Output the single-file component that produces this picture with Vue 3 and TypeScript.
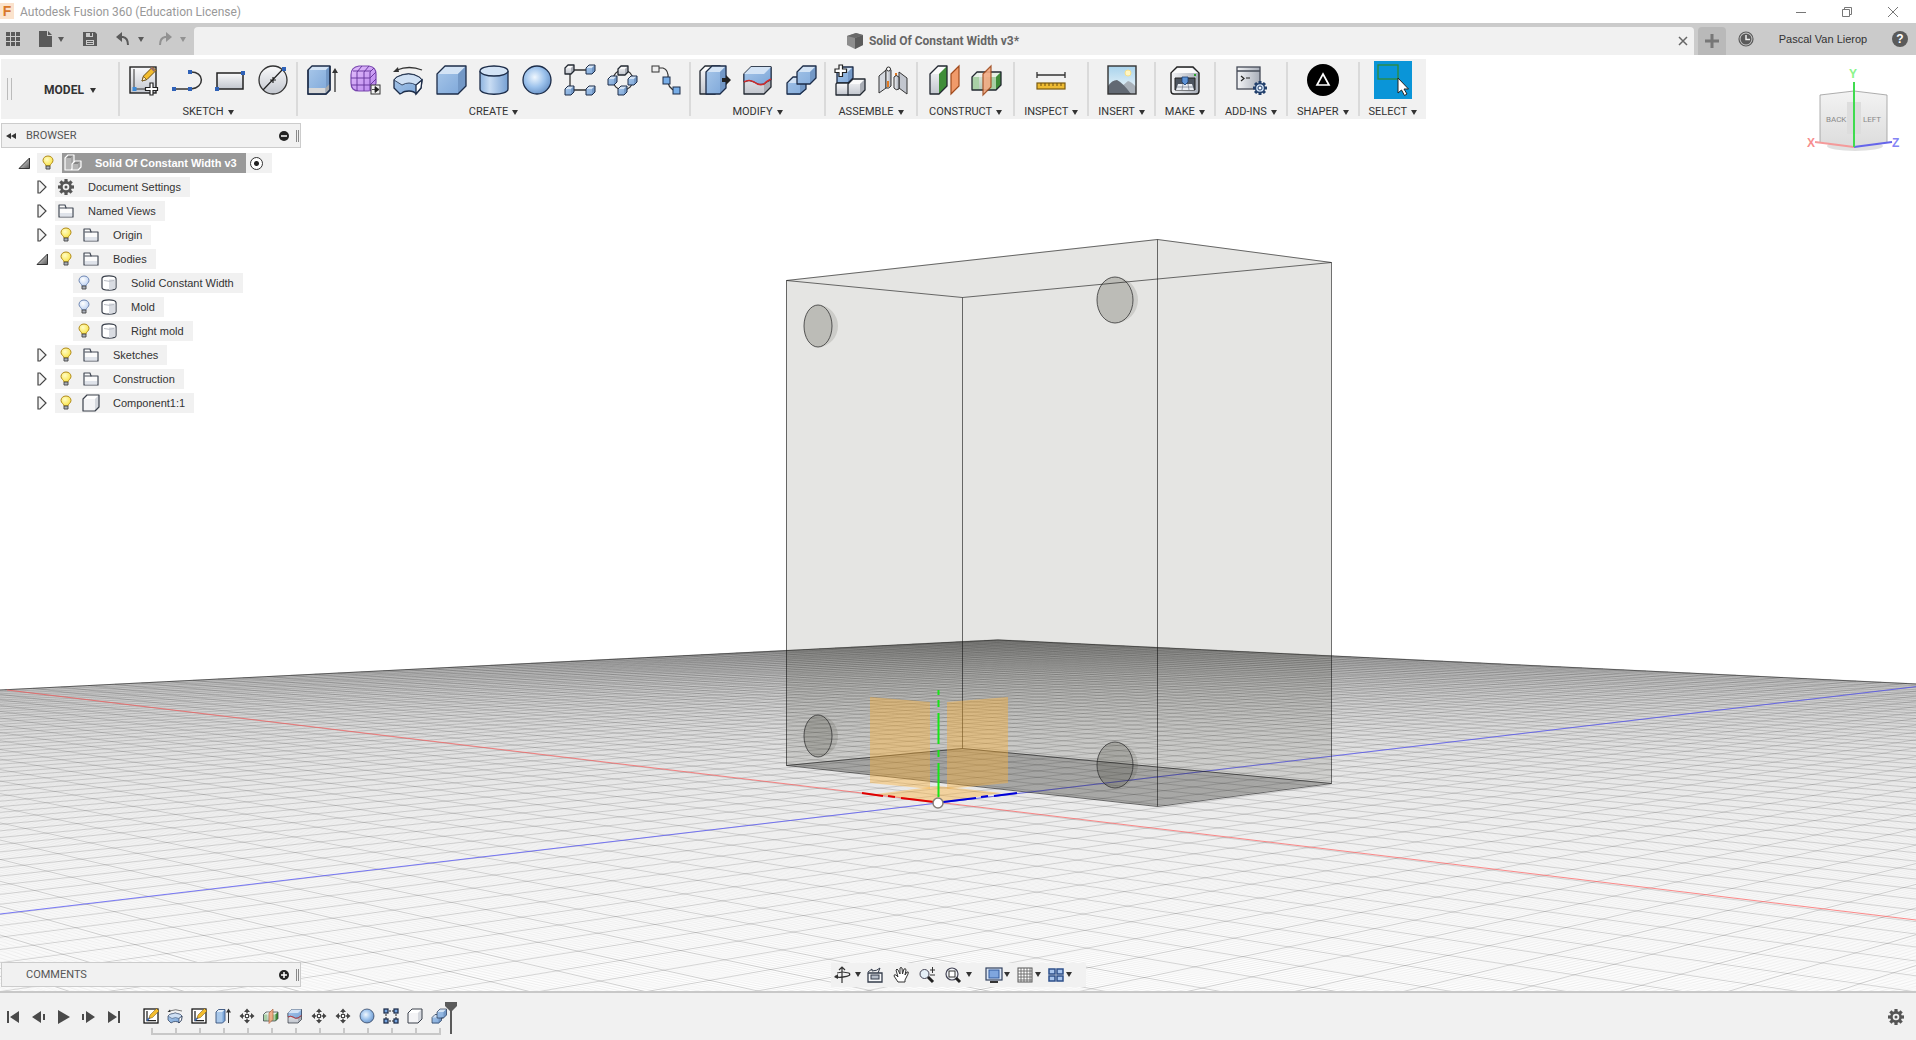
<script setup lang="ts">
interface ToolGroup { label: string; icons: string[] }
interface TreeRow { label: string; level: number; icon: string; arrow?: 'open' | 'closed'; bulb?: 'on' | 'off'; root?: boolean }
interface GridLine { d: string; major: boolean }

const DARK = '#1c2c48'

/* A cuboid seen from the upper left: front face, lid, right side. */
function cube(x: number, y: number, w: number, h: number, d: number, front: string, lid: string, side: string, stroke = DARK, sw = 1.3): string {
  return `<path d="M${x} ${y + d}l${d} ${-d}h${w - d}v${h - d}l${-d} ${d}h${-(w - d)}z" fill="${front}"/>`
    + `<path d="M${x} ${y + d}l${d} ${-d}h${w - d}l${-d} ${d}z" fill="${lid}"/>`
    + `<path d="M${x + w - d} ${y + d}l${d} ${-d}v${h - d}l${-d} ${d}z" fill="${side}"/>`
    + `<path d="M${x} ${y + d}l${d} ${-d}h${w - d}v${h - d}l${-d} ${d}h${-(w - d)}z" fill="none" stroke="${stroke}" stroke-width="${sw}" stroke-linejoin="round"/>`
}
const blue = (x: number, y: number, w: number, h: number, d: number, sw = 1.3) => cube(x, y, w, h, d, 'url(#g-blue)', '#d3e3f5', '#7398c6', DARK, sw)
const grey = (x: number, y: number, w: number, h: number, d: number, sw = 1.3) => cube(x, y, w, h, d, 'url(#g-grey)', '#fafafa', '#a9adb5', '#222831', sw)
const dot = (x: number, y: number) => `<rect x="${x - 2}" y="${y - 2}" width="4" height="4" fill="#2f62b8"/>`
const gearTeeth = (cx: number, cy: number, r1: number, r2: number, w: number, color: string) =>
  Array.from({ length: 8 }, (_, i) => {
    const a = (i * Math.PI) / 4
    return `<path d="M${cx + r1 * Math.cos(a)} ${cy + r1 * Math.sin(a)}L${cx + r2 * Math.cos(a)} ${cy + r2 * Math.sin(a)}" stroke="${color}" stroke-width="${w}"/>`
  }).join('')

const toolIcons: Record<string, string> = {
  sketch: `<rect x="1" y="2" width="26" height="26" fill="url(#g-grey)" stroke="#222" stroke-width="1.4"/><path d="M5 4v20h14" fill="none" stroke="#333"/><rect x="3.500" y="22" width="4" height="4" fill="#3b8ad8"/><path d="M13 16l1.500-5 9-9 3.500 3.500-9 9z" fill="#f3bd2e" stroke="#6b4d12"/><path d="M13 16l1.500-4.500 3 3z" fill="#fff3cf" stroke="#6b4d12" stroke-width=".8"/><path d="M22 2.500l3.500 3.500" stroke="#9a6b66" stroke-width="2"/><path d="M21 18h3v4.500h4.500v3h-4.500v4.500h-3v-4.500h-4.500v-3h4.500z" fill="#fff" stroke="#222" stroke-width="1.200"/>`,
  line: `<path d="M2 24h17M18 7c15-1 15 16 1 17" fill="none" stroke="#333" stroke-width="1.500"/>${dot(2, 24)}${dot(18, 24)}${dot(18, 7)}`,
  rect: `<rect x="2" y="8" width="26" height="16" fill="url(#g-grey)" stroke="#222" stroke-width="1.500"/>${dot(28, 8)}${dot(2, 24)}`,
  circle: `<circle cx="15" cy="15" r="14" fill="url(#g-grey)" stroke="#333" stroke-width="1.300"/><path d="M5 25L25 4M12 15h6M15 12v6" stroke="#222" stroke-width="1.200"/>${dot(26, 4)}`,
  extrude: `${blue(1, 1, 22, 28, 4)}<path d="M1.500 23h17v5.500h-17z" fill="#d8d8d8"/><path d="M18.500 23l4-4v5l-4 4.500z" fill="#aaa"/><path d="M1 5v24h18l4-4V1" fill="none" stroke="${DARK}" stroke-width="1.300"/><path d="M28 27V6" stroke="#333" stroke-width="1.300"/><path d="M28 3l3 5h-6z" fill="#333"/>`,
  form: `<path d="M1 10q0-8 8-9h10q7 1 7 8v9q-1 8-8 8h-9q-8 0-8-8z" fill="url(#g-violet)" stroke="#7a48b0" stroke-width="1.200"/><path d="M1 13h19l6-6M1 20h19l6-6M3 6h18M7 7v19M14 7v19M20 7v18M7 7l5-6M14 7l5-6M20 7l4-4" fill="none" stroke="#6a3aa0" stroke-width="1"/><rect x="21" y="20" width="9" height="9" fill="#f1f1f1" stroke="#333"/><path d="M22 24.500h3M25 21.500l4 3-4 3z" fill="#222" stroke="#222" stroke-width=".8"/>`,
  revolve: `<path d="M4 5q12-5 25 0" fill="none" stroke="#333" stroke-width="1.300"/><path d="M0 7l5-5 1 5z" fill="#333"/><path d="M1 15l3-3q12-6 22 0l3 3-1 8-5 6q-2-3-7-3t-7 2l-2 1-6-6z" fill="url(#g-blue)" stroke="${DARK}" stroke-width="1.300" stroke-linejoin="round"/><path d="M1 15l3-3q12-6 22 0l3 3-6 5q-7-4-14 0z" fill="#cfe0f4" stroke="${DARK}" stroke-width=".8"/><path d="M23 20l6-5-1 8-5 6z" fill="#fff" stroke="${DARK}" stroke-width="1.300"/>`,
  box: blue(1, 1, 29, 28, 8),
  cylinder: `<path d="M1 6v18c0 7 28 7 28 0V6" fill="url(#g-cyl)" stroke="${DARK}" stroke-width="1.300"/><ellipse cx="15" cy="6" rx="14" ry="5" fill="#d3e3f5" stroke="${DARK}" stroke-width="1.300"/>`,
  sphere: `<circle cx="15" cy="15" r="14" fill="url(#g-ball)" stroke="${DARK}" stroke-width="1.300"/>`,
  pattern: `<path d="M5 5h20M5 5v20M5 25h20" stroke="#333" stroke-width="1.300"/>${grey(0, 0, 9, 9, 3)}${blue(21, 0, 9, 9, 3, 1)}${blue(0, 21, 9, 9, 3, 1)}${blue(21, 21, 9, 9, 3, 1)}`,
  circpattern: `<circle cx="15" cy="15" r="10" fill="none" stroke="#333" stroke-width="1.200"/>${grey(10, 1, 10, 9, 3)}${blue(0, 11, 9, 9, 3, 1)}${blue(20, 11, 9, 9, 3, 1)}${blue(10, 21, 9, 9, 3, 1)}`,
  pathpattern: `<path d="M4 3h8q6 2 5 11t8 12" fill="none" stroke="#333" stroke-width="1.200"/><rect x="1" y="1" width="7" height="6" fill="#eee" stroke="#333"/><rect x="12" y="12" width="7" height="7" fill="#78aee8" stroke="${DARK}"/><rect x="22" y="22" width="7" height="7" fill="#78aee8" stroke="${DARK}"/>`,
  presspull: `${grey(0, 1, 20, 28, 5)}${blue(6, 1, 20, 28, 6)}<path d="M22 13h4v-3l5 5-5 5v-3h-4z" fill="#222"/>`,
  fillet: `${grey(1, 2, 27, 27, 7)}<path d="M1 9l7-7h20v13q-3 1-7 4-5 2-10-2-5-3-10 0z" fill="url(#g-blue)" stroke="${DARK}"/><path d="M1 9l7-7h20l-7 7z" fill="#d3e3f5"/><path d="M1 17q5-3 10 0 5 4 10 2 3-3 7-5" fill="none" stroke="#cf2b2b" stroke-width="1.600"/>`,
  combine: `<path d="M1 18l6-6h4V7l6-6h13v12l-6 6h-4v5l-6 6H1z" fill="url(#g-blue)"/><path d="M1 18l6-6h4v6zM11 7l6-6h13l-6 6z" fill="#d3e3f5"/><path d="M24 7l6-6v12l-6 6zM14 30V19h6v5z" fill="#7398c6"/><path d="M1 18l6-6h4V7l6-6h13v12l-6 6h-4v5l-6 5H1zM11 12v7h13" fill="none" stroke="${DARK}" stroke-width="1.300" stroke-linejoin="round"/>`,
  component: `${blue(2, 2, 16, 16, 5)}${grey(1, 18, 13, 12, 1)}${grey(13, 14, 17, 16, 5)}<path d="M4 0h3.500v4h4v3.500h-4v4H4v-4H0V4h4z" fill="#fff" stroke="#222" stroke-width="1.200"/>`,
  joint: `<path d="M1 11l7-6v18l-7 5z" fill="#d5d9e0" stroke="#333"/><path d="M8 5q2-5 5 0v16q-2 3-5 2z" fill="url(#g-steel)" stroke="#333"/><circle cx="10.500" cy="4" r="2" fill="#fff" stroke="#333"/><path d="M10 16v6M18 8v6" stroke="#e37a22" stroke-width="2"/><path d="M21 7l8 6v16l-8-6z" fill="#c2c6ce" stroke="#333"/><path d="M16 12q2-3 5 0v12q-3 2-5-1z" fill="url(#g-steel)" stroke="#333"/>`,
  offsetplane: `${cube(1, 1, 17, 28, 8, 'url(#g-grey)', '#fafafa', '#3f8d39', '#222831')}<path d="M22 9l8-8v20l-8 8z" fill="#f09a6a" stroke="#a14a1c" stroke-width="1.200"/>`,
  midplane: `${cube(0, 7, 29, 18, 5, '#a9d0a6', '#e5efe4', '#3f8d39', '#222831')}<path d="M7 8h7v16H7z" fill="url(#g-grey)" opacity=".6"/><path d="M11 9l8-8v21l-8 8z" fill="#f3ab84" stroke="#a14a1c" stroke-width="1.200" opacity=".9"/>`,
  measure: `<path d="M1 10h28M1 7v6M29 7v6" stroke="#333" stroke-width="1.300"/><rect x="1" y="18" width="28" height="6" fill="#eebb32" stroke="#7a5a10" stroke-width="1.200"/><path d="M5 18v3M9 18v3M13 18v3M17 18v3M21 18v3M25 18v3" stroke="#6b4d12"/>`,
  image: `<rect x="1" y="1" width="28" height="28" fill="url(#g-sky)"/><circle cx="21" cy="8" r="3" fill="#fff6c4" stroke="#f6e08a"/><path d="M14 22l7-6q4 1 8 6v7H16z" fill="#a8b0b8"/><path d="M1 21q4-6 9-6 6 3 14 14H1z" fill="#626973"/><rect x="1" y="1" width="28" height="28" fill="none" stroke="#333" stroke-width="1.400"/>`,
  make: `<path d="M1 8l6-6h16l6 6v18q0 3-3 3H4q-3 0-3-3z" fill="url(#g-steel)" stroke="#222" stroke-width="1.400"/><path d="M2 8l6-5h14l6 5z" fill="#fafafa"/><rect x="24" y="9" width="2" height="2" fill="#29a329"/><path d="M5 13h20v12H5z" fill="#4c545f" stroke="#222"/><path d="M8 19l-2 6h18l-2-6z" fill="#e9edf2"/><path d="M12 12h6v5l-3 3-3-3z" fill="#5d93d6" stroke="#1c3d70" stroke-width=".8"/><path d="M7 22h16M13 19l-1 6M18 19l1 6" stroke="#7b8490" stroke-width=".8"/>`,
  addins: `<rect x="1" y="2" width="23" height="22" fill="url(#g-steel)" stroke="#454b57" stroke-width="1.300"/><path d="M1 6h23" stroke="#454b57" stroke-width="1.500"/><path d="M5 11l3 2.500-3 2.500M10 13h4" fill="none" stroke="#222" stroke-width="1.200"/>${gearTeeth(24, 23, 4, 7, 3, '#23406c')}<circle cx="24" cy="23" r="4.500" fill="#cfe0f4" stroke="#23406c" stroke-width="1.300"/><circle cx="24" cy="23" r="2" fill="#fff" stroke="#23406c"/>`,
  shaper: `<circle cx="15" cy="15" r="16" fill="#000"/><path d="M15 9l6 11H9z" fill="none" stroke="#fff" stroke-width="1.700"/>`,
  select: `<rect x="-4" y="-4" width="38" height="38" fill="#0a95d8"/><rect x="0" y="0" width="20" height="14" fill="none" stroke="#2f8a3a" stroke-width="1.300"/><path d="M20 13v15l3.500-3 3 5.500 2.500-1.500-3-5h4.500z" fill="#fff" stroke="#222" stroke-width="1"/>`,
}

const groups: ToolGroup[] = [
  { label: 'SKETCH', icons: ['sketch', 'line', 'rect', 'circle'] },
  { label: 'CREATE', icons: ['extrude', 'form', 'revolve', 'box', 'cylinder', 'sphere', 'pattern', 'circpattern', 'pathpattern'] },
  { label: 'MODIFY', icons: ['presspull', 'fillet', 'combine'] },
  { label: 'ASSEMBLE', icons: ['component', 'joint'] },
  { label: 'CONSTRUCT', icons: ['offsetplane', 'midplane'] },
  { label: 'INSPECT', icons: ['measure'] },
  { label: 'INSERT', icons: ['image'] },
  { label: 'MAKE', icons: ['make'] },
  { label: 'ADD-INS', icons: ['addins'] },
  { label: 'SHAPER', icons: ['shaper'] },
  { label: 'SELECT', icons: ['select'] },
]

const gear = `${gearTeeth(8, 8, 4, 8, 3.2, '#555')}<circle cx="8" cy="8" r="4.600" fill="none" stroke="#555" stroke-width="2.600"/><circle cx="8" cy="8" r="1.500" fill="#555"/>`

const treeIcons: Record<string, string> = {
  gear,
  folder: `<path d="M1 14V2h6l1 3h7v9z" fill="#fbfbfb" stroke="#444b57" stroke-width="1.200" stroke-linejoin="round"/><path d="M1.500 5h7" stroke="#444b57"/><path d="M2 10h12v3.500H2z" fill="#dfe3ea"/>`,
  body: `<path d="M1 3.500v9c0 3.500 14 3.500 14 0v-9c0-3.500-14-3.500-14 0z" fill="#fff" stroke="#3a404b" stroke-width="1.200"/><path d="M8 4.500h6.400v9l-6.400 1.500z" fill="#d9dce2"/><path d="M3 5.500q5 1.500 10 0" fill="none" stroke="#b9bdc5"/>`,
  component: cube(0, 0, 16, 16, 4, '#f4f4f6', '#fff', '#d4d7dd', '#3a404b', 1.2),
  assembly: cube(0, 0, 9, 15, 3, '#b4b4b4', '#858585', '#a2a2a2', '#fff', 1.2) + cube(7, 6, 9, 9, 3, '#b4b4b4', '#858585', '#a2a2a2', '#fff', 1.2),
}

const tree: TreeRow[] = [
  { label: 'Solid Of Constant Width v3', level: 0, icon: 'assembly', arrow: 'open', bulb: 'on', root: true },
  { label: 'Document Settings', level: 1, icon: 'gear', arrow: 'closed' },
  { label: 'Named Views', level: 1, icon: 'folder', arrow: 'closed' },
  { label: 'Origin', level: 1, icon: 'folder', arrow: 'closed', bulb: 'on' },
  { label: 'Bodies', level: 1, icon: 'folder', arrow: 'open', bulb: 'on' },
  { label: 'Solid Constant Width', level: 2, icon: 'body', bulb: 'off' },
  { label: 'Mold', level: 2, icon: 'body', bulb: 'off' },
  { label: 'Right mold', level: 2, icon: 'body', bulb: 'on' },
  { label: 'Sketches', level: 1, icon: 'folder', arrow: 'closed', bulb: 'on' },
  { label: 'Construction', level: 1, icon: 'folder', arrow: 'closed', bulb: 'on' },
  { label: 'Component1:1', level: 1, icon: 'component', arrow: 'closed', bulb: 'on' },
]

const playback = [
  { name: 'Go to start', d: 'M0 2h2v12H0zM12 2v12L3 8z' },
  { name: 'Step back', d: 'M9 2v12L0 8zM11 5h2v6h-2z' },
  { name: 'Play', d: 'M1 1l12 7-12 7z' },
  { name: 'Step forward', d: 'M0 5h2v6H0zM4 2v12l9-6z' },
  { name: 'Go to end', d: 'M1 2v12l9-6zM11 2h2v12h-2z' },
]

const tlSketch = `<rect x="1" y="1" width="28" height="28" fill="#fff" stroke="#111" stroke-width="2.500"/><path d="M7 5v19h18" fill="none" stroke="#222" stroke-width="2.500"/><path d="M7 24l7-7" stroke="#2f62b8" stroke-width="3"/><path d="M11 20l2-7L26 0l5 5-13 13z" fill="#f3bd2e" stroke="#6b4d12"/>`
const tlMove = `<path d="M15 0l6 7H9zM15 30l6-7H9zM0 15l7-6v12zM30 15l-7-6v12z" fill="#444"/><path d="M15 6v4M15 20v4M6 15h4M20 15h4" stroke="#444" stroke-width="3"/><rect x="12" y="12" width="6" height="6" fill="#fff" stroke="#444" stroke-width="2"/>`
const tlPattern = `<path d="M5 5h20M5 5v20M5 25h20M25 5v20" stroke="#222" stroke-width="2" stroke-dasharray="4 2"/>${[0, 20].map((x) => [0, 20].map((y) => `<rect x="${x + 1}" y="${y + 1}" width="8" height="8" fill="#78a5de" stroke="${DARK}" stroke-width="2.500"/>`).join('')).join('')}`
const tlExtrude = `${cube(1, 2, 18, 27, 5, '#a9c8ea', '#dfebf8', '#7ba5d8', '#35507c', 1.8)}<path d="M26 29V6" stroke="#333" stroke-width="2"/><path d="M26 0l5 8H21z" fill="#333"/>`
const timeline: { name: string; art: string }[] = [
  { name: 'Sketch 1', art: tlSketch },
  { name: 'Revolve', art: toolIcons.revolve },
  { name: 'Sketch 2', art: tlSketch },
  { name: 'Extrude', art: tlExtrude },
  { name: 'Move 1', art: tlMove },
  { name: 'Midplane', art: toolIcons.midplane },
  { name: 'Split body', art: toolIcons.fillet },
  { name: 'Move 2', art: tlMove },
  { name: 'Move 3', art: tlMove },
  { name: 'Sphere', art: toolIcons.sphere },
  { name: 'Pattern', art: tlPattern },
  { name: 'Box', art: cube(1, 1, 28, 28, 8, '#f4f4f6', '#fff', '#d4d7dd', '#3a404b', 2) },
  { name: 'Combine', art: toolIcons.combine },
]

const navTools: { name: string; art: string; caret?: boolean; kind?: string }[] = [
  { name: 'Orbit', caret: true, kind: 'wide', art: `<path d="M8 0v16M5 3l3-3 3 3" fill="none" stroke="#333" stroke-width="1.200"/><path d="M15 6q3 3-6 4-6 1-8-1" fill="none" stroke="#333" stroke-width="1.300"/><path d="M0 10l4-3v5z" fill="#333"/><path d="M3 6q5-2 12 0" fill="none" stroke="#333"/>` },
  { name: 'Look at', art: `<path d="M1 6h14v9H1z" fill="#f7f8fa" stroke="#333b4a" stroke-width="1.300"/><rect x="4" y="8" width="8" height="4" fill="#b6bdc8" stroke="#333b4a"/><path d="M1 5l4-3v2q5 0 8-3l-2 5" fill="none" stroke="#333b4a"/>` },
  { name: 'Pan', art: `<path d="M5 15l-4-6q0-2 2-1l2 2-2-7q1-2 2 0l2 4V1q1-1 2 0l.5 6 1.500-5q2-1 2 1l-1 5 2-3q2-1 1 2l-3 6v2z" fill="#fff" stroke="#333" stroke-width="1" stroke-linejoin="round"/>` },
  { name: 'Zoom', art: `<circle cx="5.500" cy="7" r="4.500" fill="#e6f0f8" stroke="#445"/><path d="M9 10l5 5" stroke="#222" stroke-width="3"/><path d="M11 3h5M13.500 0v6M11 8h5" stroke="#333"/>` },
  { name: 'Fit', caret: true, kind: 'wide', art: `<circle cx="7" cy="7" r="6" fill="#f2f5f8" stroke="#445" stroke-width="1.200"/><rect x="4" y="4" width="6" height="6" fill="#fff" stroke="#333"/><path d="M11 11l4 4" stroke="#222" stroke-width="3"/>` },
  { name: 'Display settings', caret: true, kind: 'break', art: `<rect x="0" y="1" width="16" height="12" fill="#dbe6f5" stroke="#33415e" stroke-width="1.200"/><rect x="3" y="3" width="10" height="8" fill="#7fa6de" stroke="#335a9e"/><path d="M4 15h8" stroke="#333" stroke-width="2"/>` },
  { name: 'Grid and snaps', caret: true, kind: 'near', art: `<rect x="1" y="1" width="14" height="14" fill="#fff" stroke="#555"/><path d="M4 1v14M7 1v14M10 1v14M13 1v14M1 4h14M1 7h14M1 10h14M1 13h14" stroke="#666" stroke-width=".9"/>` },
  { name: 'Viewports', caret: true, kind: 'near', art: `<path d="M1 2h6v5H1zM9 2h6v5H9zM1 9h6v5H1zM9 9h6v5H9z" fill="#a8c4ec" stroke="#2c4f8a" stroke-width="1.500"/>` },
]

/* Ground grid: plane coordinates run from -1 to 1 on both axes, then get projected. */
const depth = (u: number, v: number) => 1 - 0.7 * u - 0.742 * v
function project(u: number, v: number): string {
  const w = depth(u, v)
  return `${((938 + 930 * u - 2429 * v) / w).toFixed(2)} ${((803 - 369.6 * u - 389.6 * v) / w).toFixed(2)}`
}
const gridLines: GridLine[] = []
const NEAR = 0.45
for (let i = -500; i <= 500; i++) {
  const k = i / 500
  const major = i % 10 === 0
  const vEnd = Math.min(1, (1 - NEAR - 0.7 * k) / 0.742)
  if (vEnd > -1) gridLines.push({ d: `M${project(k, -1)}L${project(k, vEnd)}`, major })
  const uEnd = Math.min(1, (1 - NEAR - 0.742 * k) / 0.7)
  if (uEnd > -1) gridLines.push({ d: `M${project(-1, k)}L${project(uEnd, k)}`, major })
}

/* Round pin holes: dx is how far the far rim shows past the near one. */
const pins = [
  { cx: 818, cy: 326, rx: 14, ry: 21, dx: 6 },
  { cx: 1115, cy: 300, rx: 18, ry: 23, dx: 5 },
  { cx: 818, cy: 736, rx: 14, ry: 21, dx: 6 },
  { cx: 1115, cy: 765, rx: 18, ry: 23, dx: 5 },
].map((p) => ({
  ...p,
  rim: `M${p.cx} ${p.cy - p.ry}A${p.rx + p.dx} ${p.ry} 0 0 1 ${p.cx} ${p.cy + p.ry}A${p.rx} ${p.ry} 0 0 0 ${p.cx} ${p.cy - p.ry}z`,
}))
</script>

<template>
  <div class="app">
    <header class="titlebar">
      <span class="logo">F</span>
      <span class="app-name">Autodesk Fusion 360 (Education License)</span>
      <div class="window-controls">
        <button aria-label="Minimize"><svg width="12" height="12"><path d="M1 6.5h10" /></svg></button>
        <button aria-label="Restore"><svg width="12" height="12"><path d="M1.500 3.500h7v7h-7zM3.500 3v-1.500h7v7H9" /></svg></button>
        <button aria-label="Close"><svg width="12" height="12"><path d="M1 1l10 10M11 1L1 11" /></svg></button>
      </div>
    </header>

    <nav class="tabs">
      <div class="quick">
        <button aria-label="Data panel"><svg width="14" height="14"><path d="M0 0h4v4H0zM5 0h4v4H5zM10 0h4v4h-4zM0 5h4v4H0zM5 5h4v4H5zM10 5h4v4h-4zM0 10h4v4H0zM5 10h4v4H5zM10 10h4v4h-4z" fill="#5a5a5a" /></svg></button>
        <button aria-label="File"><svg width="14" height="16"><path d="M0 0h8v5h5v11H0zM9 0l4 4H9z" fill="#5a5a5a" /></svg><i class="caret soft"></i></button>
        <button aria-label="Save"><svg width="14" height="14"><path d="M0 0h12l2 2v12H0z" fill="#5a5a5a" /><path d="M3 1h7v4H3zM3 8h8v5H3z" fill="#cbcbcb" /><path d="M7 1h2v3H7zM4 9h6v1H4zM4 11h6v1H4z" fill="#5a5a5a" /></svg></button>
        <button class="step" aria-label="Undo"><svg width="14" height="14"><path d="M2 5h5q5 1 5 8" fill="none" stroke="#5a5a5a" stroke-width="2" /><path d="M6 0L0 5l6 5z" fill="#5a5a5a" /></svg><i class="caret soft"></i></button>
        <button class="step faded" aria-label="Redo"><svg width="14" height="14"><path d="M12 5H7q-5 1-5 8" fill="none" stroke="#5a5a5a" stroke-width="2" /><path d="M8 0l6 5-6 5z" fill="#5a5a5a" /></svg><i class="caret soft"></i></button>
      </div>
      <div class="doc-tab">
        <div class="doc-title">
          <svg width="16" height="16"><path d="M0 3l9-3 7 2v10l-8 4-8-4z" fill="#8e8e8e" /><path d="M8 5l8-3v10l-8 4z" fill="#5c5c5c" /><path d="M0 3l9-3 7 2-8 3z" fill="#6a6a6a" /></svg>
          <span>Solid Of Constant Width v3*</span>
        </div>
        <button class="tab-close" aria-label="Close document"><svg width="10" height="10"><path d="M1 1l8 8M9 1L1 9" stroke="#666" stroke-width="1.500" /></svg></button>
      </div>
      <button class="new-tab" aria-label="New document"><svg width="14" height="14"><path d="M7 0v14M0 7h14" stroke="#777" stroke-width="3" /></svg></button>
      <div class="account">
        <button aria-label="Job status"><svg width="16" height="16"><circle cx="8" cy="8" r="7" fill="#cbcbcb" stroke="#5a5a5a" stroke-width="1.200" /><circle cx="8" cy="8" r="5.500" fill="#5a5a5a" /><path d="M8 4v4.500h4" fill="none" stroke="#eee" stroke-width="1.500" /></svg></button>
        <button class="user">Pascal Van Lierop</button>
        <button class="help" aria-label="Help">?</button>
      </div>
    </nav>

    <main class="workspace">
      <svg class="scene" viewBox="0 55 1916 936" preserveAspectRatio="xMidYMid slice" aria-label="Model view">
        <defs>
          <linearGradient id="g-blue" x1="0" y1="0" x2="1" y2="1"><stop offset="0" stop-color="#a9c8ea" /><stop offset="1" stop-color="#7ba5d8" /></linearGradient>
          <linearGradient id="g-grey" x1="0" y1="0" x2="0" y2="1"><stop offset="0" stop-color="#fafafb" /><stop offset="1" stop-color="#c2c6ce" /></linearGradient>
          <linearGradient id="g-steel"><stop offset="0" stop-color="#f4f5f7" /><stop offset="1" stop-color="#a7adb8" /></linearGradient>
          <linearGradient id="g-violet" x1="0" y1="0" x2="1" y2="1"><stop offset="0" stop-color="#e3c0fb" /><stop offset="1" stop-color="#b883ee" /></linearGradient>
          <linearGradient id="g-cyl"><stop offset="0" stop-color="#8db3df" /><stop offset=".35" stop-color="#c9ddf4" /><stop offset="1" stop-color="#76a0d3" /></linearGradient>
          <linearGradient id="g-sky" x1="0" y1="0" x2="0" y2="1"><stop offset="0" stop-color="#a9d3ec" /><stop offset="1" stop-color="#f1f8fb" /></linearGradient>
          <radialGradient id="g-ball" cx=".42" cy=".4" r=".6"><stop offset="0" stop-color="#f0f7fe" /><stop offset=".6" stop-color="#9cc2ec" /><stop offset="1" stop-color="#7099cc" /></radialGradient>
          <radialGradient id="g-bulb-on" cx=".4" cy=".35" r=".7"><stop offset="0" stop-color="#fffcc8" /><stop offset="1" stop-color="#f9e23c" /></radialGradient>
          <radialGradient id="g-bulb-off" cx=".4" cy=".35" r=".7"><stop offset="0" stop-color="#fff" /><stop offset="1" stop-color="#b9cff2" /></radialGradient>
          <linearGradient id="g-open" x1="0" y1="0" x2="1" y2="1"><stop offset="0" stop-color="#fff" /><stop offset="1" stop-color="#555" /></linearGradient>
          <linearGradient id="g-face" x1="0" y1="0" x2="0" y2="1"><stop offset="0" stop-color="#f3f3f3" /><stop offset="1" stop-color="#dcdcdc" /></linearGradient>
        </defs>

        <g fill="none" stroke="#000">
          <path v-for="(l, i) in gridLines" :key="i" :d="l.d" :stroke-opacity="l.major ? 0.17 : 0.034" />
        </g>
        <path d="M0 690L998 640L1916 684" fill="none" stroke="#333" stroke-opacity=".7" />
        <path d="M7 690L1916 920" stroke="#ff5a5a" stroke-opacity=".7" />
        <path d="M0 914L938 803L1930 685" fill="none" stroke="#4a4aff" stroke-opacity=".7" />

        <path d="M786 280L1157 239L1331 262V783L1157 806L786 765z" fill="#28281c" fill-opacity=".12" />
        <path d="M786 765L962 748L1331 783L1157 806z" fill="#000" fill-opacity=".2" />
        <g v-for="(p, i) in pins" :key="'p' + i">
          <path :d="p.rim" fill="#3a3a2c" fill-opacity=".14" />
          <ellipse :cx="p.cx" :cy="p.cy" :rx="p.rx" :ry="p.ry" fill="#3a3a2c" fill-opacity=".24" stroke="#333" stroke-opacity=".8" />
        </g>
        <g fill="none" stroke="#111" stroke-opacity=".6">
          <path d="M786.500 280.500L1157.500 239.500L1331.500 262.500V783.500L1157.500 806.500L786.500 765.500z" />
          <path d="M786.500 280.500L962.500 297.500L1331.500 262.500M962.500 297.500V748.500M1157.500 239.500V806.500M786.500 765.500L962.500 748.500L1331.500 783.500" />
        </g>

        <g fill="#ffb02e" fill-opacity=".4">
          <path d="M870 697L930 702V789L870 783z" />
          <path d="M947 702L1008 697V783L947 789z" />
          <path d="M876 794L938 786L1002 793L938 803z" />
        </g>
        <g fill="none" stroke-width="2">
          <path d="M938.500 690v5M938.500 700v7M938.500 713v31M938.500 750v7M938.500 763v34" stroke="#17e617" />
          <path d="M862 793l21 3M888 796l7 1M901 798l33 4" stroke="#e00000" />
          <path d="M943 802l33-4M981 797l7-1M994 796l23-3" stroke="#0000d8" />
        </g>
        <circle cx="938" cy="803" r="5" fill="#fff" stroke="#857f78" stroke-width="1.500" />
      </svg>

      <div class="toolbar">
        <div class="grip"></div>
        <button class="mode">MODEL<i class="caret"></i></button>
        <section v-for="g in groups" :key="g.label" class="group" :class="{ single: g.icons.length === 1 }">
          <div class="group-icons">
            <button v-for="name in g.icons" :key="name" :aria-label="name">
              <svg width="30" height="30" viewBox="0 0 30 30" v-html="toolIcons[name]"></svg>
            </button>
          </div>
          <button class="group-label">{{ g.label }}<i class="caret"></i></button>
        </section>
      </div>

      <svg class="viewcube" width="96" height="96" viewBox="1808 62 96 96" aria-label="View cube">
        <ellipse cx="1855" cy="146" rx="28" ry="5" fill="#000" opacity=".12" />
        <path d="M1820 95l34-4v56l-34-5z" fill="url(#g-face)" />
        <path d="M1887 95l-33-4v56l33-4z" fill="url(#g-face)" />
        <path d="M1847 102h14v32h-14z" fill="#ddd" />
        <path d="M1820 142V95l34-4 33 4v48" fill="none" stroke="#999" stroke-width=".8" />
        <path d="M1815 142l39 5" stroke="#f49a9a" stroke-width="2" />
        <path d="M1854 147l38-5" stroke="#6565ea" stroke-width="2" />
        <path d="M1854 147V82" stroke="#3fdc4f" stroke-width="2" />
        <text x="1826" y="122" class="cube-text">BACK</text>
        <text x="1863" y="122" class="cube-text">LEFT</text>
        <text x="1849" y="78" class="axis-text" fill="#8af58a">Y</text>
        <text x="1807" y="147" class="axis-text" fill="#f78d8d">X</text>
        <text x="1892" y="147" class="axis-text" fill="#8484f5">Z</text>
      </svg>

      <aside class="browser">
        <div class="panel-head">
          <button class="collapse" aria-label="Collapse"><svg width="10" height="6"><path d="M5 0v6L0 3zM10 0v6L5 3z" fill="#333" /></svg></button>
          <span>BROWSER</span>
          <button class="round" aria-label="Minimize panel"><svg width="10" height="10"><circle cx="5" cy="5" r="5" fill="#222" /><path d="M2 5h6" stroke="#fff" stroke-width="1.500" /></svg></button>
          <i class="panel-grip"></i>
        </div>
        <ul class="tree">
          <li v-for="row in tree" :key="row.label" :class="'level-' + row.level">
            <button v-if="row.arrow" class="twist" :aria-label="'Toggle ' + row.label">
              <svg v-if="row.arrow === 'open'" width="12" height="12"><path d="M1 11.500h10.500V1z" fill="url(#g-open)" stroke="#333" /></svg>
              <svg v-else width="10" height="14"><path d="M1 1h2l6 6-6 6H1z" fill="#f4f4f4" stroke="#444" stroke-width="1.200" /></svg>
            </button>
            <span v-else class="twist"></span>
            <div class="node">
              <button v-if="row.bulb" class="bulb" :aria-label="'Visibility of ' + row.label">
                <svg width="12" height="16" viewBox="0 0 12 16">
                  <path d="M6 1C3 1 1 3 1 5.500 1 8 4 9 4 11h4c0-2 3-3 3-5.500C11 3 9 1 6 1z" :fill="row.bulb === 'on' ? 'url(#g-bulb-on)' : 'url(#g-bulb-off)'" :stroke="row.bulb === 'on' ? '#b08a1c' : '#7088b4'" />
                  <path d="M4 11h4v3H4z" fill="#aab0ba" stroke="#444" stroke-width=".9" />
                </svg>
              </button>
              <div class="item" :class="{ selected: row.root }">
                <svg class="item-icon" width="16" height="16" viewBox="0 0 16 16" v-html="treeIcons[row.icon]"></svg>
                <span class="item-label">{{ row.label }}</span>
              </div>
              <label v-if="row.root" class="activate"><input type="radio" name="active" checked aria-label="Activate component" /></label>
            </div>
          </li>
        </ul>
      </aside>

      <div class="bottom">
        <div class="panel-head comments">
          <span>COMMENTS</span>
          <button class="round" aria-label="Expand comments"><svg width="10" height="10"><circle cx="5" cy="5" r="5" fill="#222" /><path d="M2 5h6M5 2v6" stroke="#fff" stroke-width="1.500" /></svg></button>
          <i class="panel-grip"></i>
        </div>
        <div class="navbar">
          <button v-for="n in navTools" :key="n.name" :class="n.kind" :aria-label="n.name">
            <svg width="16" height="16" viewBox="0 0 16 16" v-html="n.art"></svg>
            <i v-if="n.caret" class="caret"></i>
          </button>
        </div>
      </div>
    </main>

    <footer class="timeline">
      <div class="playback">
        <button v-for="p in playback" :key="p.name" :aria-label="p.name"><svg width="13" height="16"><path :d="p.d" fill="#4a4a4a" /></svg></button>
      </div>
      <div class="history">
        <button v-for="t in timeline" :key="t.name" :aria-label="t.name">
          <svg width="16" height="16" viewBox="-1 -1 32 32" v-html="t.art"></svg>
        </button>
      </div>
      <svg class="marker" width="12" height="32"><path d="M0 0h12v4L7 9v23H5V9L0 4z" fill="#5a5a5a" /></svg>
      <button class="settings" aria-label="Timeline settings"><svg width="16" height="16" v-html="gear"></svg></button>
    </footer>
  </div>
</template>

<style>
html, body { margin: 0; height: 100%; overflow: hidden; background: #fff; }
</style>

<style scoped>
.app { display: flex; flex-direction: column; height: 100vh; font: 11px/16px "Liberation Sans", Arial, sans-serif; color: #333; }
button { border: 0; padding: 0; margin: 0; background: none; color: inherit; font: inherit; display: flex; align-items: center; justify-content: center; }
svg { display: block; overflow: visible; flex: none; }
.caret { width: 0; height: 0; border: 3px solid transparent; border-top: 5px solid #333; border-bottom: 0; margin-left: 4px; }

.titlebar { display: flex; align-items: center; height: 23px; background: #fff; flex: none; }
.logo { width: 14px; height: 16px; line-height: 16px; margin-top: -2px; background: #fbe3cd; color: #d9772a; font-weight: bold; font-size: 14px; text-align: center; }
.app-name { margin-left: 6px; font: 12px/22px Roboto, sans-serif; color: #999; }
.window-controls { display: flex; margin-left: auto; }
.window-controls button { width: 46px; height: 20px; }
.window-controls path { fill: none; stroke: #777; }

.tabs { display: flex; height: 32px; background: #cbcbcb; flex: none; align-items: flex-end; }
.quick { display: flex; width: 194px; height: 32px; align-items: center; box-sizing: border-box; padding-left: 6px; }
.quick button + button { margin-left: 19px; }
.quick .step + .step { margin-left: 14px; }
.quick .faded { opacity: .5; }
.quick .caret { border-top-color: #5a5a5a; margin-left: 5px; }
.quick .step .caret { margin-left: 8px; }
.doc-tab { flex: 1; display: flex; align-items: center; height: 28px; background: #f1f1f1; border-radius: 4px 4px 0 0; }
.doc-title { flex: 1; display: flex; align-items: center; justify-content: center; gap: 6px; font: bold 12px/16px Roboto, sans-serif; color: #666; }
.tab-close { width: 22px; height: 28px; }
.new-tab { width: 28px; height: 28px; margin-left: 4px; background: #b9b9b9; border-radius: 4px 4px 0 0; }
.account { display: flex; align-items: center; height: 32px; width: 190px; box-sizing: border-box; padding: 0 8px 0 12px; justify-content: space-between; }
.user { margin: 0 12px; }
.help { width: 16px; height: 16px; border-radius: 50%; background: #5a5a5a; color: #fff; font: bold 12px/16px "Liberation Sans", sans-serif; }

.workspace { position: relative; flex: 1; min-height: 0; display: flex; flex-direction: column; overflow: hidden; }
.scene { position: absolute; inset: 0; width: 100%; height: 100%; }
.toolbar { position: relative; display: flex; align-self: flex-start; height: 60px; margin: 4px 0 0 1px; background: #f1f1f1; }
.grip { width: 3px; height: 22px; margin: 19px 0 0 6px; border: solid #bbb; border-width: 0 1px; }
.mode { width: 106px; box-sizing: border-box; padding: 2px 0 0 10px; font: bold 12px/16px Roboto, sans-serif; }
.mode .caret { margin-left: 6px; }
.group { display: flex; flex-direction: column; padding: 0 2px; border-left: 2px solid #ddd; border-image: linear-gradient(transparent 4px, #dadada 4px, #dadada 56px, transparent 56px) 1; }
.group-icons { display: flex; justify-content: center; height: 42px; }
.group-icons button { width: 43px; height: 42px; }
.group-label { height: 18px; padding: 4px 9px 0; font: 11px/14px Roboto, sans-serif; }
.single .group-label { padding: 4px 7px 0; }

.viewcube { position: absolute; top: 7px; right: 12px; }
.cube-text { font: 8px Roboto, sans-serif; fill: #8a8a8a; }
.axis-text { font: bold 12px "Liberation Sans", sans-serif; }

.browser { position: relative; width: 301px; margin-top: 4px; }
.panel-head { position: relative; display: flex; align-items: center; box-sizing: border-box; width: 300px; height: 25px; margin-left: 1px; border: 1px solid #ccc; background: #f1f1f1; font: 11px/16px Roboto, sans-serif; color: #555; }
.collapse { width: 18px; }
.panel-head span { margin-left: 6px; }
.panel-head.comments span { margin-left: 24px; }
.round { margin-left: auto; margin-right: 7px; }
.panel-grip { width: 1px; height: 12px; border: solid #888; border-width: 0 1px; margin-right: 1px; }
.tree { list-style: none; margin: 5px 0 0; padding: 0; display: flex; flex-direction: column; gap: 4px; }
.tree li { display: flex; height: 20px; padding-left: 17px; }
.tree .level-1 { padding-left: 35px; }
.tree .level-2 { padding-left: 53px; }
.twist { width: 14px; margin-right: 6px; }
.node { display: flex; background: #f1f1f1; }
.bulb { width: 25px; padding-right: 3px; box-sizing: border-box; }
.item { display: flex; align-items: center; padding-right: 9px; }
.item-icon { margin: 0 14px 0 3px; }
.item.selected { background: #999; color: #fff; font-weight: bold; }
.activate { display: flex; align-items: center; padding: 0 9px 0 4px; }
.activate input { appearance: none; width: 13px; height: 13px; margin: 0; border: 1px solid #333; border-radius: 50%; background: radial-gradient(circle, #222 2px, #fff 3px); }

.bottom { position: relative; margin: auto 0 4px; display: grid; grid-template-columns: 1fr auto 1fr; align-items: center; }
.comments { grid-column: 1; }
.navbar { grid-column: 2; display: flex; align-items: center; height: 24px; padding: 0 14px 0 3px; background: #f1f1f1; }
.navbar button + button { margin-left: 10px; }
.navbar button.wide + button { margin-left: 6px; }
.navbar button.wide + button.break { margin-left: 14px; }
.navbar button + button.near { margin-left: 7px; }
.navbar .caret { margin-left: 2px; }
.navbar .wide .caret { margin-left: 5px; }

.timeline { display: flex; height: 49px; box-sizing: border-box; border-top: 2px solid #c8c8c8; background: #f1f1f1; flex: none; }
.playback { display: flex; height: 48px; align-items: center; padding-left: 1px; }
.playback button { width: 25px; height: 24px; }
.history { display: flex; margin-left: 13px; height: 42px; }
.history button { position: relative; width: 24px; height: 42px; padding: 15px 0 0; box-sizing: border-box; align-items: flex-start; }
.history button::before { content: ""; position: absolute; left: 12px; bottom: 1px; width: 2px; height: 6px; background: #c8c8c8; }
.history button::after { content: ""; position: absolute; left: 0; right: 0; bottom: 0; height: 2px; background: #c8c8c8; }
.history button:first-child::after { left: 12px; }
.history button:last-child::after { right: 10px; }
.marker { margin-top: 9px; margin-left: -6px; }
.settings { width: 16px; height: 48px; margin-left: auto; margin-right: 12px; }
</style>
